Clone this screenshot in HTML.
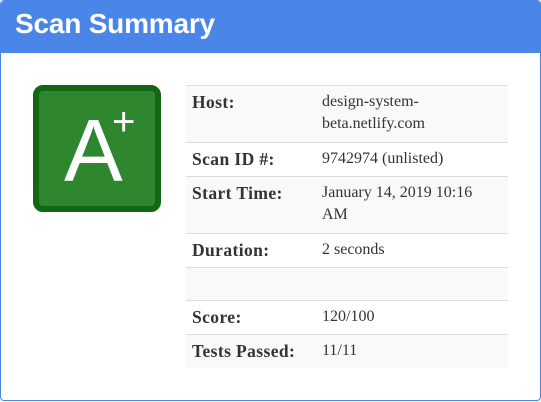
<!DOCTYPE html>
<html><head><style>
*{margin:0;padding:0;box-sizing:border-box}
body{width:541px;height:402px;background:#fff;position:relative;overflow:hidden;font-family:"Liberation Serif",serif}
.card{position:absolute;left:0;top:0;width:541px;height:401px;border:1px solid #4a86e8;border-radius:4px;overflow:hidden}
.hd{position:absolute;left:0;top:0;width:541px;height:52px;background:#4a86e8;border-radius:4px 4px 0 0}
.hd span{position:absolute;left:14px;top:7px;color:#fff;font:bold 28px "Liberation Sans",sans-serif;letter-spacing:-0.2px}
.grade{position:absolute;left:32px;top:84px;width:128px;height:127px;background:#2e872e;border:6px solid #136613;border-radius:10px}
.A{position:absolute;left:25px;top:16px;color:#fff;font:88px "Liberation Sans",sans-serif;line-height:1}
.P{position:absolute;left:73px;top:11px;color:#fff;font:40px "Liberation Sans",sans-serif;line-height:1}
table{position:absolute;left:185px;top:84px;width:322px;border-collapse:collapse;font-size:16px;color:#333}
td{border-top:1px solid #ddd;padding:5px 6px 6px;vertical-align:top;line-height:22px}
td:first-child{font-weight:bold;width:130px;font-size:17.5px;letter-spacing:0.4px}
tr:nth-child(odd) td{background:#f9f9f9}
</style></head><body>
<div class="card">
<div class="hd"><span>Scan Summary</span></div>
<div class="grade"><div class="A">A</div><div class="P">+</div></div>
<table>
<tr style="height:57px"><td>Host:</td><td>design-system-<br>beta.netlify.com</td></tr>
<tr style="height:34px"><td>Scan ID #:</td><td>9742974 (unlisted)</td></tr>
<tr style="height:57px"><td>Start Time:</td><td>January 14, 2019 10:16<br>AM</td></tr>
<tr style="height:34px"><td>Duration:</td><td>2 seconds</td></tr>
<tr style="height:33px"><td></td><td></td></tr>
<tr style="height:34px"><td>Score:</td><td>120/100</td></tr>
<tr style="height:33px"><td>Tests Passed:</td><td>11/11</td></tr>
</table>
</div>
</body></html>
